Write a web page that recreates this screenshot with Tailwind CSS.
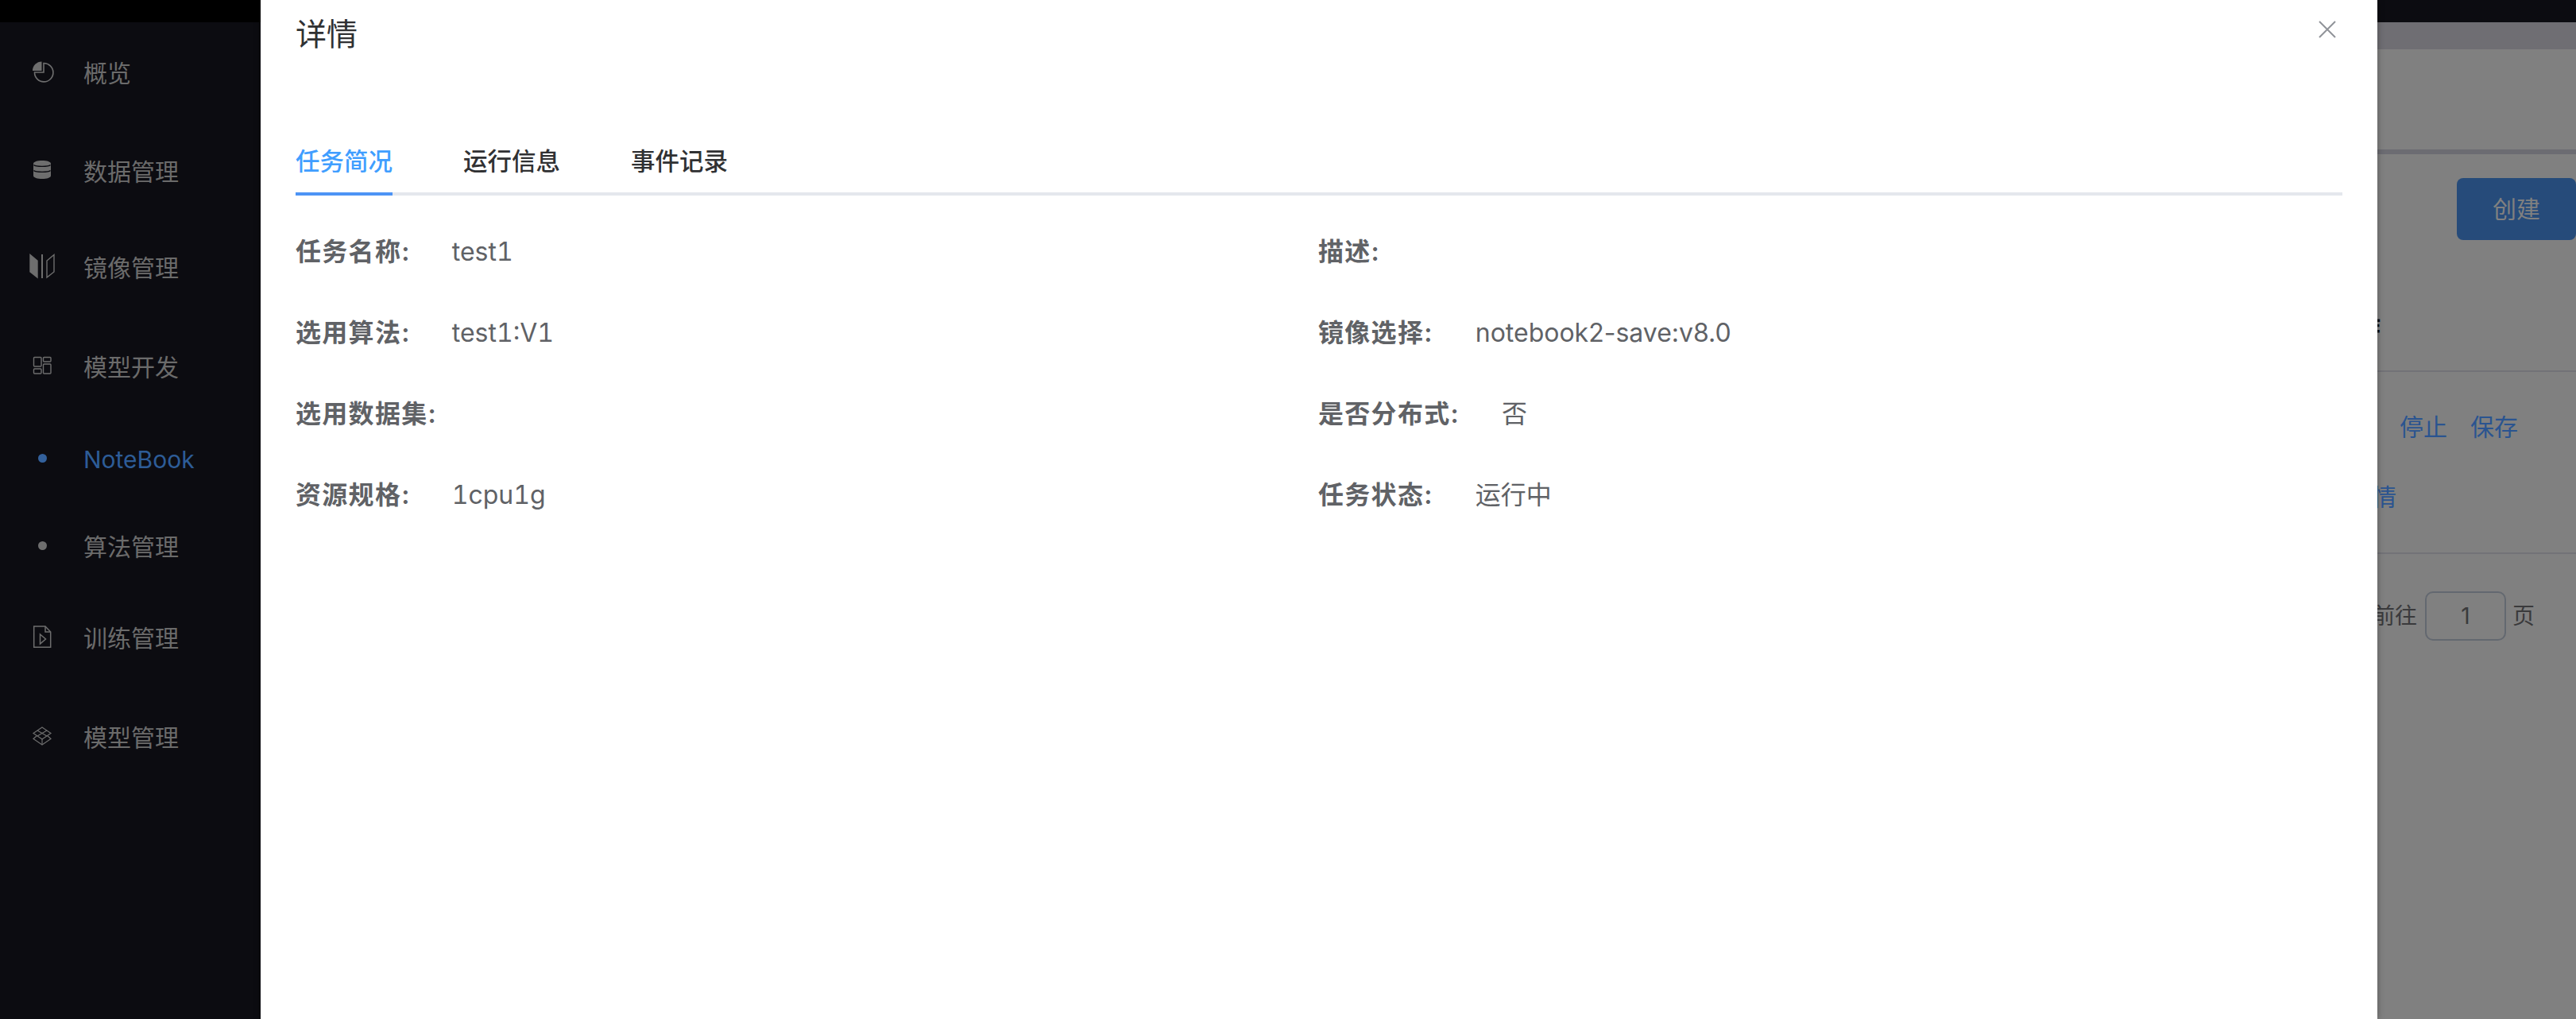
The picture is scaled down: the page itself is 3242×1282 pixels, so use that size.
<!DOCTYPE html>
<html lang="zh-CN">
<head>
    <meta charset="UTF-8">
    <title>详情</title>
    <script src="https://cdn.jsdelivr.net/npm/@tailwindcss/browser@4"></script>
</head>
<body class="font-[Inter,'Noto_Sans_CJK_SC',sans-serif]">
    <div class="relative flex w-[3242px] h-[1282px] overflow-hidden bg-[#808080]">
        <!-- sidebar -->
        <aside class="w-[328px] shrink-0 bg-[#0c0c11] text-[30px] text-[#6b6b6b]">
            <div class="h-[28px] bg-black"></div>
            <div class="flex items-center h-[128px] pl-[33px]">
                <svg class="w-[40px] h-[40px] -mt-1 shrink-0" viewBox="0 0 40 40" fill="none" stroke="#6e6e6e" stroke-width="1.6"><path d="M22 9.5A11.7 11.7 0 1 1 10.5 21H22Z"/><path d="M19.5 7.5A11.5 11.5 0 0 0 8 19H19.5Z" fill="#6e6e6e" stroke="none"/></svg>
                <span class="ml-[32px]">概览</span>
            </div>
            <div class="flex items-center h-[120px] pl-[33px]">
                <svg class="w-[40px] h-[40px] -mt-1 shrink-0" viewBox="0 0 40 40" fill="#6e6e6e"><path d="M9 12C9 9.5 14 8 20 8S31 9.5 31 12V27C31 29.5 26 31 20 31S9 29.5 9 27Z"/><path d="M9.5 13.5C12 16 28 16 30.5 13.5M9.5 20.5C12 23 28 23 30.5 20.5" fill="none" stroke="#0c0c11" stroke-width="1.3"/></svg>
                <span class="ml-[32px]">数据管理</span>
            </div>
            <div class="flex items-center h-[122px] pl-[33px]">
                <svg class="w-[40px] h-[40px] -mt-1 shrink-0" viewBox="0 0 40 40" fill="none" stroke="#6e6e6e" stroke-width="1.4"><path d="M5 5.5L14 13V34L5 27Z" fill="#6e6e6e"/><path d="M20 5V35" stroke-width="2"/><path d="M26 13L35 5.5V27L26 34Z"/></svg>
                <span class="ml-[32px]">镜像管理</span>
            </div>
            <div class="flex items-center h-[128px] pl-[33px]">
                <svg class="w-[40px] h-[40px] -mt-1 shrink-0" viewBox="0 0 40 40" fill="none" stroke="#6e6e6e" stroke-width="1.4"><rect x="9.5" y="9.5" width="9.5" height="11.5" rx="1"/><rect x="21.5" y="9.5" width="9.5" height="5.5" rx="1"/><rect x="9.5" y="24" width="9.5" height="6" rx="1"/><rect x="21.5" y="18" width="9.5" height="12" rx="1"/></svg>
                <span class="ml-[32px]">模型开发</span>
            </div>
            <div class="flex items-center h-[104px] pl-[33px] text-[#2d5c97]">
                <span class="flex items-center justify-center w-[40px] h-[40px] -mt-1 shrink-0"><span class="w-[11px] h-[11px] rounded-full bg-[#33619c]"></span></span>
                <span class="ml-[32px]">NoteBook</span>
            </div>
            <div class="flex items-center h-[116px] pl-[33px]">
                <span class="flex items-center justify-center w-[40px] h-[40px] -mt-1 shrink-0"><span class="w-[11px] h-[11px] rounded-full bg-[#6e6e6e]"></span></span>
                <span class="ml-[32px]">算法管理</span>
            </div>
            <div class="flex items-center h-[114px] pl-[33px]">
                <svg class="w-[40px] h-[40px] -mt-1 shrink-0" viewBox="0 0 40 40" fill="none" stroke="#6e6e6e" stroke-width="1.5"><path d="M9.7 7H24L30.7 14V33.3H9.7Z"/><path d="M24 7V14H30.7"/><path d="M17.5 17L24.5 23L17.5 29Z"/></svg>
                <span class="ml-[32px]">训练管理</span>
            </div>
            <div class="flex items-center h-[136px] pl-[33px]">
                <svg class="w-[40px] h-[40px] -mt-1 shrink-0" viewBox="0 0 40 40" fill="none" stroke="#6e6e6e" stroke-width="1.2"><path d="M20 9L31 16.5L20 24L9 16.5Z"/><path d="M13.5 19.5L9 23.5L20 31L31 23.5L26.5 19.5"/><path d="M20 24V31M14 13L26 20M26 13L14 20"/></svg>
                <span class="ml-[32px]">模型管理</span>
            </div>
        </aside>

        <!-- page behind the dialog -->
        <main class="flex-1 flex flex-col min-w-0">
            <div class="h-[28px] shrink-0 bg-[#0c0c11]"></div>
            <div class="h-[34px] shrink-0 bg-[#6f6e73]"></div>
            <div class="h-[126px] shrink-0"></div>
            <div class="h-[6px] shrink-0 bg-[#6c6c72]"></div>
            <div class="flex justify-end mt-[30px]">
                <div class="flex items-center justify-center w-[150px] h-[78px] rounded-[8px] bg-[#264b7a] text-[30px] text-[#808080]">创建</div>
            </div>
            <div class="flex items-center justify-end h-[110px] mt-[54px] pr-[246px] text-[30px] font-bold text-[#111111]">操作</div>
            <div class="h-[2px] bg-[#727277]"></div>
            <div class="pt-[25px] pb-[26px] text-[30px] text-[#2a5490]">
                <div class="flex items-center justify-end gap-[29px] h-[88px] pr-[73px]"><span>查看</span><span>停止</span><span>保存</span></div>
                <div class="flex items-center justify-end h-[88px] pr-[226px]">详情</div>
            </div>
            <div class="h-[2px] bg-[#727277]"></div>
            <div class="flex items-center justify-end mt-[47px] pr-[52px] text-[28px] text-[#3a3a3c]">
                <span>前往</span>
                <span class="flex items-center justify-center w-[102px] h-[62px] ml-[10px] mr-[8px] rounded-[10px] border-2 border-[#636870]">1</span>
                <span>页</span>
            </div>
        </main>

        <!-- dialog -->
        <section class="absolute left-[328px] top-0 w-[2664px] h-full px-[44px] bg-white shadow-[0_0_8px_rgba(0,0,0,0.35)]">
            <div class="flex items-center justify-between h-[86px]">
                <h2 class="text-[39px] text-[#303133]">详情</h2>
                <svg class="w-[22px] h-[22px] -mt-[13px] mr-[8px]" viewBox="0 0 22 22" fill="none" stroke="#909399" stroke-width="2"><path d="M1 1L21 21M21 1L1 21"/></svg>
            </div>
            <div class="flex gap-[89px] h-[160px] pt-[94px] border-b-4 border-[#e4e7ed] text-[30.5px] font-medium text-[#303133]">
                <div class="relative h-[62px] text-[#409eff] whitespace-nowrap">任务简况<span class="absolute left-0 -bottom-[4px] w-full h-[4px] bg-[#4d94f5]"></span></div>
                <div class="whitespace-nowrap">运行信息</div>
                <div class="whitespace-nowrap">事件记录</div>
            </div>
            <div class="grid grid-cols-[1287px_1fr] auto-rows-[102px] pt-[20px] text-[32px] text-[#606266]">
                <div class="flex items-center"><span class="font-semibold tracking-[1.3px] mr-[52px]">任务名称:</span><span class="tabular-nums">test1</span></div>
                <div class="flex items-center"><span class="font-semibold tracking-[1.3px] mr-[53px]">描述:</span></div>
                <div class="flex items-center"><span class="font-semibold tracking-[1.3px] mr-[52px]">选用算法:</span><span class="tabular-nums">test1:V1</span></div>
                <div class="flex items-center"><span class="font-semibold tracking-[1.3px] mr-[53px]">镜像选择:</span><span>notebook2-save:v8.0</span></div>
                <div class="flex items-center"><span class="font-semibold tracking-[1.3px] mr-[52px]">选用数据集:</span></div>
                <div class="flex items-center"><span class="font-semibold tracking-[1.3px] mr-[53px]">是否分布式:</span><span>否</span></div>
                <div class="flex items-center"><span class="font-semibold tracking-[1.3px] mr-[52px]">资源规格:</span><span class="tabular-nums">1cpu1g</span></div>
                <div class="flex items-center"><span class="font-semibold tracking-[1.3px] mr-[53px]">任务状态:</span><span>运行中</span></div>
            </div>
        </section>
    </div>
</body>
</html>
